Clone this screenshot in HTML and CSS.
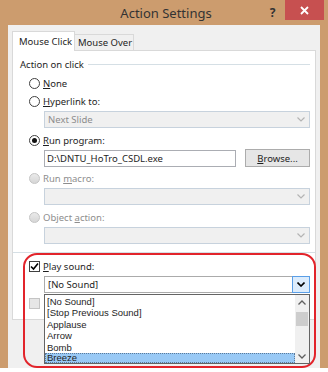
FILE: index.html
```html
<!DOCTYPE html>
<html lang="en">
<head>
    <meta charset="UTF-8">
    <title>Action Settings</title>
    <link rel="stylesheet" href="styles.css">
</head>
<body>
    <div class="window">
        <div class="titlebar">
            <span class="title">Action Settings</span>
            <span class="help">?</span>
            <span class="close">
                <svg width="9" height="9" viewBox="0 0 9 9"><path d="M1 1 L8 8 M8 1 L1 8" stroke="#fff" stroke-width="1.8"/></svg>
            </span>
        </div>
        <div class="client">
            <div class="tabs">
                <div class="tab active">Mouse Click</div>
                <div class="tab">Mouse Over</div>
            </div>
            <div class="panel">
                <div class="group-title"><span>Action on click</span></div>

                <div class="option row-none"><span class="radio"></span><span><u>N</u>one</span></div>
                <div class="option"><span class="radio"></span><span><u>H</u>yperlink to:</span></div>
                <div class="combo disabled first">
                    <span class="combo-text">Next Slide</span>
                    <span class="combo-btn"><svg width="8" height="5" viewBox="0 0 8 5"><path d="M0.5 0.5 L4 4 L7.5 0.5" fill="none" stroke="#b4b4b4" stroke-width="1.2"/></svg></span>
                </div>

                <div class="option gap3"><span class="radio checked"></span><span><u>R</u>un program:</span></div>
                <div class="file-row">
                    <div class="textbox">D:\DNTU_HoTro_CSDL.exe</div>
                    <button class="browse"><u>B</u>rowse...</button>
                </div>

                <div class="option gap2 off"><span class="radio"></span><span>Run <u>m</u>acro:</span></div>
                <div class="combo disabled">
                    <span class="combo-text"></span>
                    <span class="combo-btn"><svg width="8" height="5" viewBox="0 0 8 5"><path d="M0.5 0.5 L4 4 L7.5 0.5" fill="none" stroke="#b4b4b4" stroke-width="1.2"/></svg></span>
                </div>

                <div class="option gap3 off"><span class="radio"></span><span>Object <u>a</u>ction:</span></div>
                <div class="combo disabled">
                    <span class="combo-text"></span>
                    <span class="combo-btn"><svg width="8" height="5" viewBox="0 0 8 5"><path d="M0.5 0.5 L4 4 L7.5 0.5" fill="none" stroke="#b4b4b4" stroke-width="1.2"/></svg></span>
                </div>

                <div class="separator"></div>

                <div class="option check-row"><span class="checkbox checked">
                    <svg width="9" height="9" viewBox="0 0 9 9"><path d="M1 4.5 L3.5 7 L8 1.5" fill="none" stroke="#000" stroke-width="1.6"/></svg>
                </span><span><u>P</u>lay sound:</span></div>
                <div class="combo active">
                    <span class="combo-text">[No Sound]</span>
                    <span class="combo-btn"><svg width="8" height="5" viewBox="0 0 8 5"><path d="M0.5 0.5 L4 4 L7.5 0.5" fill="none" stroke="#000" stroke-width="1.6"/></svg></span>
                </div>
                <div class="option check-row off"><span class="checkbox"></span></div>
            </div>
        </div>
    </div>

    <div class="callout"></div>

    <div class="droplist">
        <div class="items">
            <div class="item">[No Sound]</div>
            <div class="item">[Stop Previous Sound]</div>
            <div class="item">Applause</div>
            <div class="item">Arrow</div>
            <div class="item">Bomb</div>
            <div class="item selected">Breeze</div>
        </div>
        <div class="scrollbar">
            <span class="arrow"><svg width="8" height="5" viewBox="0 0 8 5"><path d="M0.5 4.5 L4 1 L7.5 4.5" fill="none" stroke="#606060" stroke-width="1.3"/></svg></span>
            <span class="thumb"></span>
            <span class="track"></span>
            <span class="arrow"><svg width="8" height="5" viewBox="0 0 8 5"><path d="M0.5 0.5 L4 4 L7.5 0.5" fill="none" stroke="#606060" stroke-width="1.3"/></svg></span>
        </div>
    </div>
</body>
</html>
```

FILE: styles.css
```css
body {
    margin: 0;
    padding: 0;
    background-color: #fff;
    font-family: "Noto Sans", "Open Sans", sans-serif;
    font-size: 9.5px;
    color: #1e1e1e;
    width: 328px;
    height: 372px;
    overflow: hidden;
    position: relative;
}
u {
    text-decoration: underline;
    text-underline-offset: 1px;
}
.window {
    width: 328px;
    height: 368px;
    background-color: #cc9c6e;
    display: flex;
    flex-direction: column;
}
.titlebar {
    height: 25px;
    display: flex;
    align-items: flex-start;
    padding-left: 72px;
    box-sizing: border-box;
}
.title {
    flex: 1;
    text-align: center;
    font-size: 13px;
    line-height: 26px;
    color: #333;
}
.help {
    width: 25px;
    text-align: center;
    font-size: 12px;
    font-weight: bold;
    line-height: 26px;
    color: #333;
}
.close {
    width: 39px;
    height: 20px;
    margin-right: 4px;
    background-color: #c75050;
    display: flex;
    align-items: center;
    justify-content: center;
}
.client {
    flex: 1;
    margin: 0 8px;
    background-color: #f0f0f0;
    padding: 6px 4px 0 4px;
}
.tabs {
    display: flex;
    align-items: flex-end;
    height: 19px;
}
.tab {
    box-sizing: border-box;
    border: 1px solid #d9d9d9;
    border-bottom: none;
    line-height: 14px;
}
.tab.active {
    width: 63px;
    height: 20px;
    background-color: #fff;
    padding: 3px 0 0 6px;
    position: relative;
    z-index: 1;
    margin-bottom: -1px;
}
.tab:not(.active) {
    width: 60px;
    height: 16px;
    margin-left: -1px;
    padding: 1px 0 0 3px;
}
.panel {
    box-sizing: border-box;
    width: 304px;
    height: 270px;
    background-color: #fff;
    border: 1px solid #d9d9d9;
    padding: 6px 5px 0 7px;
    display: flex;
    flex-direction: column;
}
.group-title {
    height: 14px;
    display: flex;
    align-items: center;
    gap: 4px;
}
.group-title::after {
    content: "";
    flex: 1;
    height: 1px;
    background-color: #d5dfe5;
}
.option {
    height: 18px;
    display: flex;
    align-items: center;
    gap: 3px;
    padding-left: 9px;
}
.row-none { margin-top: 3px; }
.gap2 { margin-top: 2px; }
.gap3 { margin-top: 3px; }
.option.off { color: #8d8d8d; }
.radio {
    box-sizing: border-box;
    width: 11px;
    height: 11px;
    border-radius: 50%;
    border: 1px solid #404040;
    background-color: #fff;
    display: flex;
    align-items: center;
    justify-content: center;
}
.radio.checked::after {
    content: "";
    width: 5px;
    height: 5px;
    border-radius: 50%;
    background-color: #111;
}
.off .radio {
    border-color: #c4c4c4;
    background: linear-gradient(#eaeaea, #d6d6d6);
}
.checkbox {
    box-sizing: border-box;
    width: 11px;
    height: 11px;
    border: 1px solid #404040;
    background-color: #fff;
    display: flex;
    align-items: center;
    justify-content: center;
}
.off .checkbox {
    border-color: #c4c4c4;
    background-color: #e6e6e6;
}
.check-row { margin-top: 4px; }
.check-row.off { margin-top: 1px; }
.combo {
    box-sizing: border-box;
    height: 17px;
    margin: 1px 0 0 24px;
    border: 1px solid #c7d2dd;
    background-color: #f0f0f0;
    display: flex;
}
.combo-text {
    flex: 1;
    padding-left: 3px;
    line-height: 15px;
    color: #8d8d8d;
}
.combo-btn {
    width: 16px;
    display: flex;
    align-items: center;
    justify-content: center;
}
.combo.active {
    background-color: #fff;
    border-color: #ababab;
}
.combo.active .combo-text {
    color: #1e1e1e;
}
.combo.active .combo-btn {
    margin: -1px -1px -1px 0;
    border: 1px solid #5a9ee6;
    background-color: #dcecfc;
}
.file-row {
    height: 18px;
    margin-left: 24px;
    display: flex;
    align-items: flex-end;
}
.textbox {
    box-sizing: border-box;
    width: 192px;
    height: 17px;
    border: 1px solid #abadb3;
    background-color: #fff;
    padding-left: 2px;
    line-height: 15px;
}
.browse {
    box-sizing: border-box;
    width: 65px;
    height: 18px;
    margin-left: 9px;
    align-self: flex-start;
    border: 1px solid #acacac;
    background-color: #e6e6e6;
    font-family: inherit;
    font-size: 9.5px;
    color: #1e1e1e;
    padding: 0;
}
.separator {
    height: 1px;
    margin: 8px -5px 0 -7px;
    background-color: #d5dfe5;
}
.callout {
    position: absolute;
    left: 23px;
    top: 253px;
    width: 293px;
    height: 115px;
    box-sizing: border-box;
    border: 2px solid #e2242b;
    border-radius: 14px;
}
.droplist {
    position: absolute;
    left: 44px;
    top: 294px;
    width: 266px;
    height: 70px;
    box-sizing: border-box;
    border: 1px solid #646464;
    background-color: #fff;
    display: flex;
    overflow: hidden;
    font-family: "Liberation Sans", Arial, sans-serif;
}
.items {
    flex: 1;
    padding-top: 0.5px;
}
.item {
    height: 11.5px;
    line-height: 11.5px;
    padding-left: 2px;
    white-space: nowrap;
}
.item.selected {
    height: 10px;
    line-height: 10px;
    background-color: #99c9f5;
    outline: 1px dotted #5c7a99;
    outline-offset: -1px;
}
.scrollbar {
    width: 14px;
    background-color: #f0f0f0;
    display: flex;
    flex-direction: column;
    align-items: center;
}
.arrow {
    height: 14px;
    display: flex;
    align-items: center;
    justify-content: center;
}
.thumb {
    width: 12px;
    height: 14px;
    margin-top: 3px;
    background-color: #cdcdcd;
}
.track {
    flex: 1;
}
```
